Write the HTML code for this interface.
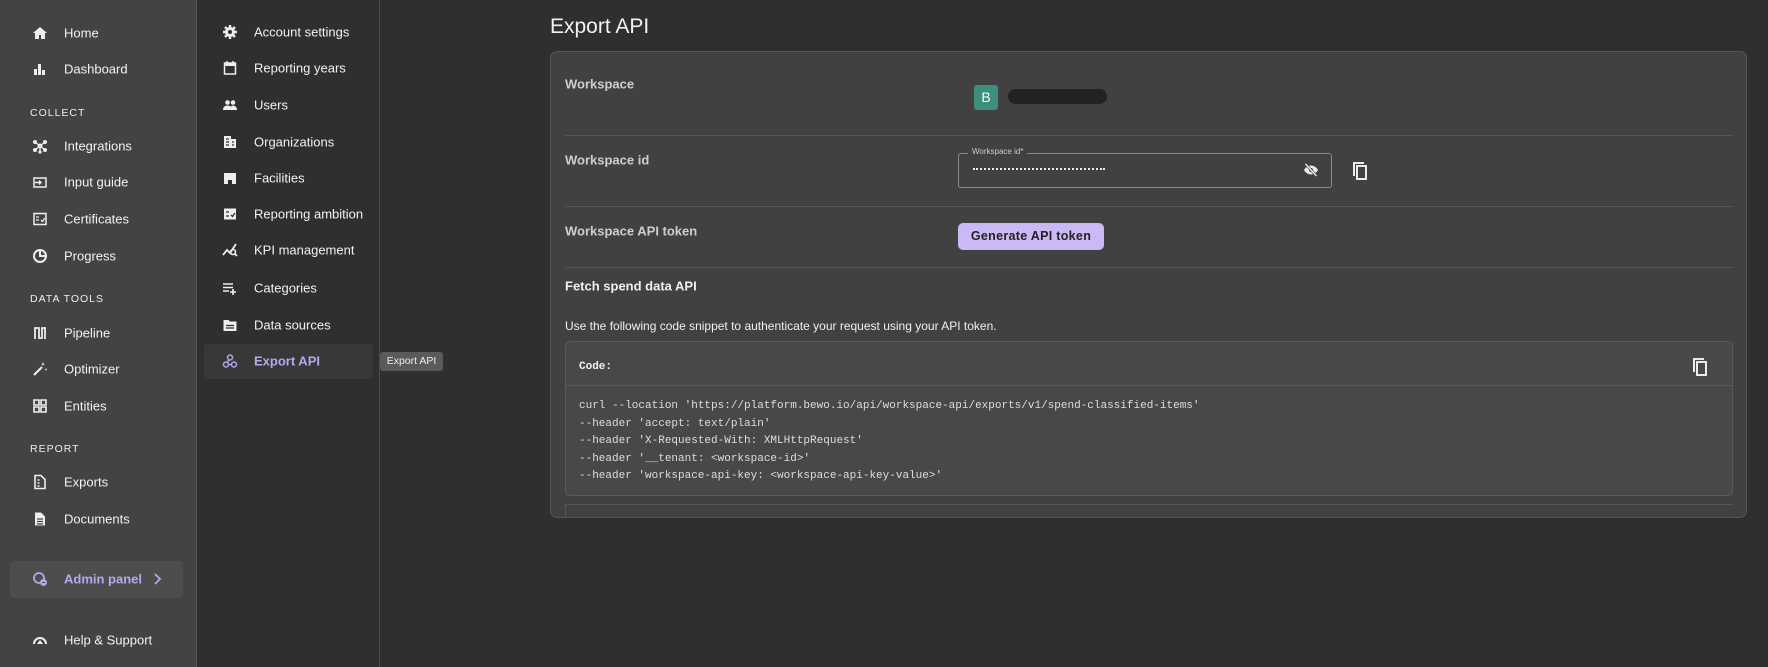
<!DOCTYPE html>
<html><head><meta charset="utf-8"><style>
*{margin:0;padding:0;box-sizing:border-box}
body{width:1768px;height:667px;background:#2f2f2f;font-family:"Liberation Sans",sans-serif;color:#eee;position:relative;overflow:hidden}
.a{position:absolute;white-space:nowrap}
.s1{left:0;top:0;width:197px;height:667px;background:#434343;border-right:1px solid #555}
.s2{left:197px;top:0;width:183px;height:667px;background:#2f2f2f;border-right:1px solid #4a4a4a}
.n{font-size:13px;color:#f2f2f2;transform:translateY(-50%)}
.ic{position:absolute;transform:translate(-50%,-50%);width:16px;height:16px}
.sec{font-size:10.5px;letter-spacing:1px;color:#eee;transform:translateY(-50%)}
.lbl{font-size:13px;font-weight:bold;color:#cfcfcf;transform:translateY(-50%)}
.hr{height:1px;background:#565656;left:565px;width:1168px}
.code{font-family:"Liberation Mono",monospace;font-size:11px;color:#ddd;transform:translateY(-50%)}
</style></head><body>
<div class="a s1"></div>
<div class="a s2"></div>

<!-- sidebar 1 -->
<svg class="ic" style="left:40px;top:33px" viewBox="0 0 16 16"><path d="M8 2L1 8h2v6h4v-4h2v4h4V8h2z" fill="#eee"/></svg>
<div class="a n" style="left:64px;top:33px">Home</div>
<svg class="ic" style="left:40px;top:69px" viewBox="0 0 16 16"><path d="M2 8h3v6H2zM6 3h3v11H6zM10 9h3v5h-3z" fill="#eee"/></svg>
<div class="a n" style="left:64px;top:69px">Dashboard</div>
<div class="a sec" style="left:30px;top:113px">COLLECT</div>
<svg class="ic" style="left:40px;top:146px" viewBox="0 0 16 16"><circle cx="8" cy="8" r="2.5" fill="#eee"/><circle cx="3" cy="4" r="2" fill="#eee"/><circle cx="13" cy="4" r="2" fill="#eee"/><circle cx="3" cy="12" r="2" fill="#eee"/><circle cx="13" cy="12" r="2" fill="#eee"/><circle cx="8" cy="14" r="1.6" fill="#eee"/><path d="M3 4L13 12M13 4L3 12M8 8v6" stroke="#eee" stroke-width="1.3"/></svg>
<div class="a n" style="left:64px;top:146px">Integrations</div>
<svg class="ic" style="left:40px;top:182px" viewBox="0 0 16 16"><path d="M2 4h12v9H2z" fill="none" stroke="#eee" stroke-width="1.5"/><path d="M3 8.5h6M7 6.5l2 2-2 2" stroke="#eee" stroke-width="1.4" fill="none"/></svg>
<div class="a n" style="left:64px;top:182px">Input guide</div>
<svg class="ic" style="left:40px;top:219px" viewBox="0 0 16 16"><rect x="2" y="2.5" width="12" height="11" fill="none" stroke="#eee" stroke-width="1.5"/><path d="M4 6h3M4 9h3M9 9l1.5 1.5L13 7" stroke="#eee" stroke-width="1.3" fill="none"/></svg>
<div class="a n" style="left:64px;top:219px">Certificates</div>
<svg class="ic" style="left:40px;top:256px" viewBox="0 0 16 16"><circle cx="8" cy="8" r="6" fill="none" stroke="#eee" stroke-width="2"/><path d="M8 2v6h6" stroke="#eee" stroke-width="2" fill="none"/></svg>
<div class="a n" style="left:64px;top:256px">Progress</div>
<div class="a sec" style="left:30px;top:299px">DATA TOOLS</div>
<svg class="ic" style="left:40px;top:333px" viewBox="0 0 16 16"><path d="M3 14V3h4v10h3V3h3v11" fill="none" stroke="#eee" stroke-width="1.8"/></svg>
<div class="a n" style="left:64px;top:333px">Pipeline</div>
<svg class="ic" style="left:40px;top:369px" viewBox="0 0 16 16"><path d="M2 14l8-8" stroke="#eee" stroke-width="2"/><path d="M11 1l.6 1.8L13 3l-1.4.6L11 5l-.6-1.4L9 3l1.4-.2zM14 7l.4 1 1 .3-1 .4L14 10l-.4-1.3-1-.4 1-.3z" fill="#eee"/></svg>
<div class="a n" style="left:64px;top:369px">Optimizer</div>
<svg class="ic" style="left:40px;top:406px" viewBox="0 0 16 16"><path d="M2 2h5v5H2zM9 2h5v5H9zM2 9h5v5H2zM9 9h5v5H9z" fill="none" stroke="#eee" stroke-width="1.6"/></svg>
<div class="a n" style="left:64px;top:406px">Entities</div>
<div class="a sec" style="left:30px;top:449px">REPORT</div>
<svg class="ic" style="left:40px;top:482px" viewBox="0 0 16 16"><path d="M3 1.5h6l4 4v9H3z" fill="none" stroke="#eee" stroke-width="1.6"/><path d="M5.5 6h2M5.5 9h2M5.5 12h2" stroke="#eee" stroke-width="1.4"/></svg>
<div class="a n" style="left:64px;top:482px">Exports</div>
<svg class="ic" style="left:40px;top:519px" viewBox="0 0 16 16"><path d="M3 1.5h6l4 4v9H3z" fill="#eee"/><path d="M5 8h6M5 10.5h6M5 13h6" stroke="#434343" stroke-width="1.2"/></svg>
<div class="a n" style="left:64px;top:519px">Documents</div>
<div class="a" style="left:10px;top:561px;width:173px;height:37px;background:#4d4d4d;border-radius:4px"></div>
<svg class="ic" style="left:40px;top:579px" viewBox="0 0 16 16"><circle cx="7" cy="7" r="5" fill="none" stroke="#b7a4ec" stroke-width="1.8"/><circle cx="11.5" cy="11.5" r="3.5" fill="#b7a4ec"/><path d="M10 11.5h3" stroke="#4d4d4d" stroke-width="1"/></svg>
<div class="a n" style="left:64px;top:579px;color:#b9a6f0;font-weight:bold">Admin panel</div>
<svg class="ic" style="left:157px;top:579px" viewBox="0 0 16 16"><path d="M6 3l5 5-5 5" stroke="#b9a6f0" stroke-width="1.8" fill="none"/></svg>
<svg class="ic" style="left:40px;top:640px" viewBox="0 0 16 16"><path d="M2 12a6 6 0 0 1 12 0" fill="none" stroke="#eee" stroke-width="2"/><path d="M5 12l3-4 3 4z" fill="#eee"/></svg>
<div class="a n" style="left:64px;top:640px">Help &amp; Support</div>

<!-- sidebar 2 -->
<svg class="ic" style="left:230px;top:32px" viewBox="0 0 16 16"><circle cx="8" cy="8" r="5" fill="#eee"/><path d="M8 1v14M1 8h14M3 3l10 10M13 3L3 13" stroke="#eee" stroke-width="2.4"/><circle cx="8" cy="8" r="2" fill="#2f2f2f"/></svg>
<div class="a n" style="left:254px;top:32px">Account settings</div>
<svg class="ic" style="left:230px;top:68px" viewBox="0 0 16 16"><rect x="2.5" y="3" width="11" height="11" fill="none" stroke="#eee" stroke-width="1.5"/><path d="M2.5 3h11v3h-11z" fill="#eee"/><path d="M5 1v3M11 1v3" stroke="#eee" stroke-width="1.5"/></svg>
<div class="a n" style="left:254px;top:68px">Reporting years</div>
<svg class="ic" style="left:230px;top:105px" viewBox="0 0 16 16"><circle cx="5.5" cy="5.5" r="2.3" fill="#eee"/><circle cx="11" cy="5.5" r="2.3" fill="#eee"/><path d="M1 13c0-3 2-4.5 4.5-4.5S10 10 10 13zM8 13c0-2 1-4.5 3-4.5s4 1.5 4 4.5z" fill="#eee"/></svg>
<div class="a n" style="left:254px;top:105px">Users</div>
<svg class="ic" style="left:230px;top:142px" viewBox="0 0 16 16"><path d="M2 2h7v3h5v9H2z" fill="#eee"/><path d="M4 5h3M4 8h3M4 11h3M10 8h2M10 11h2" stroke="#2f2f2f" stroke-width="1.2"/></svg>
<div class="a n" style="left:254px;top:142px">Organizations</div>
<svg class="ic" style="left:230px;top:178px" viewBox="0 0 16 16"><path d="M2 3h12v11H10v-4H6v4H2z" fill="#eee"/></svg>
<div class="a n" style="left:254px;top:178px">Facilities</div>
<svg class="ic" style="left:230px;top:214px" viewBox="0 0 16 16"><rect x="2" y="2.5" width="12" height="11" fill="#eee"/><path d="M4 6h3M4 10h3M9 9l1.5 1.5L13 7" stroke="#2f2f2f" stroke-width="1.3" fill="none"/></svg>
<div class="a n" style="left:254px;top:214px">Reporting ambition</div>
<svg class="ic" style="left:230px;top:250px" viewBox="0 0 16 16"><path d="M1 13l4-5 3 3 6-9" stroke="#eee" stroke-width="1.8" fill="none"/><circle cx="11" cy="10" r="2.5" fill="none" stroke="#eee" stroke-width="1.6"/><path d="M13 12l2 2" stroke="#eee" stroke-width="1.8"/></svg>
<div class="a n" style="left:254px;top:250px">KPI management</div>
<svg class="ic" style="left:230px;top:288px" viewBox="0 0 16 16"><path d="M1 4h10M1 7.5h10M1 11h6M11 9v6M8 12h6" stroke="#eee" stroke-width="1.6"/></svg>
<div class="a n" style="left:254px;top:288px">Categories</div>
<svg class="ic" style="left:230px;top:325px" viewBox="0 0 16 16"><path d="M1.5 3h5l1.5 1.5h6.5v9.5h-13z" fill="#eee"/><path d="M4 8.5h8M4 11h8" stroke="#2f2f2f" stroke-width="1.2"/></svg>
<div class="a n" style="left:254px;top:325px">Data sources</div>
<div class="a" style="left:204px;top:344px;width:169px;height:35px;background:#383838;border-radius:4px"></div>
<svg class="ic" style="left:230px;top:361px" viewBox="0 0 16 16"><g fill="none" stroke="#b7a4ec" stroke-width="1.5"><circle cx="8" cy="4.5" r="2.5"/><circle cx="4" cy="11.5" r="2.5"/><circle cx="12" cy="11.5" r="2.5"/><path d="M7 7l-2 2.5M6.5 11.5h3"/></g></svg>
<div class="a n" style="left:254px;top:361px;color:#b9a6f0;font-weight:bold">Export API</div>
<div class="a" style="left:380px;top:352px;width:63px;height:19px;background:#5a5a5a;border-radius:3px;font-size:10.5px;color:#eee;line-height:19px;text-align:center">Export API</div>

<!-- main -->
<div class="a" style="left:550px;top:15px;font-size:21px;color:#f2f2f2">Export API</div>
<div class="a" style="left:550px;top:51px;width:1197px;height:467px;background:#414141;border:1px solid #555;border-radius:7px"></div>

<div class="a lbl" style="left:565px;top:84px">Workspace</div>
<div class="a" style="left:974px;top:85px;width:24px;height:25px;background:#3e8e7e;border-radius:3px;color:#fff;font-size:14px;text-align:center;line-height:25px">B</div>
<div class="a" style="left:1008px;top:89px;width:99px;height:15px;background:#222;border-radius:8px"></div>
<div class="a hr" style="top:135px"></div>

<div class="a lbl" style="left:565px;top:160px">Workspace id</div>
<div class="a" style="left:958px;top:153px;width:374px;height:35px;border:1px solid #8a8a8a;border-radius:3px"></div>
<div class="a" style="left:968px;top:146px;padding:0 4px;background:#414141;font-size:8px;color:#ccc;line-height:12px">Workspace id*</div>
<div class="a" style="left:973px;top:168px;width:132px;height:0;border-top:2px dotted #eee"></div>
<svg class="a" style="left:1303px;top:162px" width="16" height="16" viewBox="0 0 16 16"><path d="M1 8s2.5-4.5 7-4.5S15 8 15 8s-2.5 4.5-7 4.5S1 8 1 8z" fill="#eee"/><circle cx="8" cy="8" r="2" fill="#414141"/><path d="M2.5 2l11 12" stroke="#414141" stroke-width="2.5"/><path d="M2.5 2l11 12" stroke="#eee" stroke-width="1.3"/></svg>
<svg class="a" style="left:1351px;top:161px" width="18" height="20" viewBox="0 0 18 20"><path d="M3 15V2h10" fill="none" stroke="#fff" stroke-width="1.8"/><rect x="6" y="5" width="9" height="13" fill="none" stroke="#fff" stroke-width="1.8"/></svg>
<div class="a hr" style="top:206px"></div>

<div class="a lbl" style="left:565px;top:231px">Workspace API token</div>
<div class="a" style="left:958px;top:223px;width:146px;height:27px;background:#cbb9f5;border-radius:5px;color:#222;font-size:12.5px;font-weight:bold;text-align:center;line-height:27px;letter-spacing:.3px">Generate API token</div>
<div class="a hr" style="top:267px"></div>

<div class="a lbl" style="left:565px;top:286px;color:#f0f0f0">Fetch spend data API</div>
<div class="a" style="left:565px;top:326px;font-size:12px;color:#f0f0f0;transform:translateY(-50%)">Use the following code snippet to authenticate your request using your API token.</div>

<div class="a" style="left:565px;top:341px;width:1168px;height:155px;background:#484848;border:1px solid #5a5a5a;border-radius:5px"></div>
<div class="a" style="left:566px;top:385px;width:1166px;height:1px;background:#5a5a5a"></div>
<div class="a code" style="left:579px;top:367px;color:#f2f2f2;font-weight:bold">Code:</div>
<svg class="a" style="left:1691px;top:357px" width="18" height="20" viewBox="0 0 18 20"><path d="M3 15V2h10" fill="none" stroke="#fff" stroke-width="1.8"/><rect x="6" y="5" width="9" height="13" fill="none" stroke="#fff" stroke-width="1.8"/></svg>
<div class="a code" style="left:579px;top:406px">curl --location 'https://platform.bewo.io/api/workspace-api/exports/v1/spend-classified-items'</div>
<div class="a code" style="left:579px;top:424px">--header 'accept: text/plain'</div>
<div class="a code" style="left:579px;top:441px">--header 'X-Requested-With: XMLHttpRequest'</div>
<div class="a code" style="left:579px;top:459px">--header '__tenant: &lt;workspace-id&gt;'</div>
<div class="a code" style="left:579px;top:476px">--header 'workspace-api-key: &lt;workspace-api-key-value&gt;'</div>
<div class="a hr" style="top:504px"></div>
<div class="a" style="left:565px;top:504px;width:1px;height:14px;background:#565656"></div>
</body></html>
